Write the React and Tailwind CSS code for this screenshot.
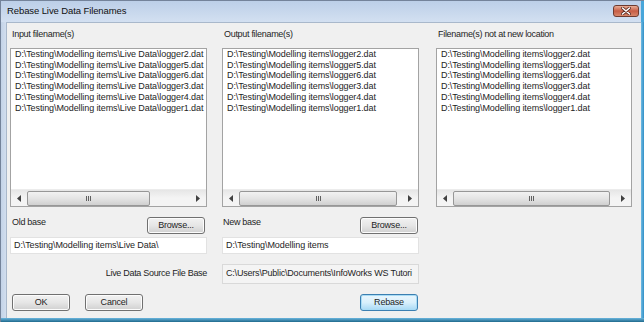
import React from 'react';

const FONT = { fontFamily: '"Liberation Sans", Arial, sans-serif' };

const inputFiles = [
  'D:\\Testing\\Modelling items\\Live Data\\logger2.dat',
  'D:\\Testing\\Modelling items\\Live Data\\logger5.dat',
  'D:\\Testing\\Modelling items\\Live Data\\logger6.dat',
  'D:\\Testing\\Modelling items\\Live Data\\logger3.dat',
  'D:\\Testing\\Modelling items\\Live Data\\logger4.dat',
  'D:\\Testing\\Modelling items\\Live Data\\logger1.dat',
];

const outputFiles = [
  'D:\\Testing\\Modelling items\\logger2.dat',
  'D:\\Testing\\Modelling items\\logger5.dat',
  'D:\\Testing\\Modelling items\\logger6.dat',
  'D:\\Testing\\Modelling items\\logger3.dat',
  'D:\\Testing\\Modelling items\\logger4.dat',
  'D:\\Testing\\Modelling items\\logger1.dat',
];

function ScrollBar({ thumb }) {
  return (
    <div className="h-[17px] flex bg-gradient-to-b from-[#e6e6e6] via-[#f4f4f4] to-[#f4f4f4] border-t border-[#ececec]">
      <div className="w-[16px] flex items-center justify-center">
        <svg width="4" height="7" viewBox="0 0 4 7"><path d="M4 0 L0 3.5 L4 7 Z" fill="#404040" /></svg>
      </div>
      <div className="flex-1 flex items-center">
        <div
          className={`${thumb} h-[15px] rounded-[2px] border border-[#979797] bg-gradient-to-b from-[#f2f2f2] via-[#e4e4e4] to-[#d0d0d0] flex items-center justify-center gap-[1px]`}
        >
          <div className="w-[1px] h-[5px] bg-[#606060]" />
          <div className="w-[1px] h-[5px] bg-[#606060]" />
          <div className="w-[1px] h-[5px] bg-[#606060]" />
        </div>
      </div>
      <div className="w-[16px] flex items-center justify-center">
        <svg width="4" height="7" viewBox="0 0 4 7"><path d="M0 0 L4 3.5 L0 7 Z" fill="#404040" /></svg>
      </div>
    </div>
  );
}

function ListBox({ items, thumb }) {
  return (
    <div className="h-[159px] bg-white border border-[#a3a3a3] flex flex-col">
      <div className="flex-1 pl-[4px] overflow-hidden">
        {items.map((f) => (
          <div key={f} className="text-[9px] leading-[10.7px] tracking-[-0.1px] text-[#1e1e1e] whitespace-nowrap">
            {f}
          </div>
        ))}
      </div>
      <ScrollBar thumb={thumb} />
    </div>
  );
}

function Button({ children, primary = false, className = '' }) {
  return (
    <div
      className={`${className} h-[17px] w-[58px] rounded-[3px] border flex items-center justify-center text-[9px] tracking-[-0.2px] text-[#1e1e1e] ${
        primary
          ? 'border-[#3c7fb1] bg-gradient-to-b from-[#eaf6fd] via-[#d9f0fc] to-[#a7d9f5] shadow-[inset_0_0_0_1px_#a9dcf5]'
          : 'border-[#707070] bg-gradient-to-b from-[#f2f2f2] via-[#e6e6e6] to-[#d0d0d0] shadow-[inset_0_0_0_1px_#fcfcfc]'
      }`}
    >
      {children}
    </div>
  );
}

function Label({ children }) {
  return (
    <div className="h-[12px] text-[9px] leading-[12px] tracking-[-0.3px] text-[#1e1e1e] whitespace-nowrap">
      {children}
    </div>
  );
}

export default function App() {
  return (
    <div
      style={FONT}
      className="w-[644px] h-[322px] flex flex-col bg-[#c8d7eb] border-l border-t border-[#74839a] overflow-hidden"
    >
      {/* title bar */}
      <div className="h-[21px] flex items-center bg-gradient-to-b from-[#bccfe8] to-[#d3e0f1] pl-[6px]">
        <span className="flex-1 text-[9.5px] text-[#101010] tracking-[-0.1px]">Rebase Live Data Filenames</span>
        <div className="w-[26px] h-[12px] mr-[2px] mt-[-1px] rounded-[3px] border border-[#6e3b30] bg-gradient-to-b from-[#e8ad97] via-[#c65d45] to-[#d7866a] flex items-center justify-center">
          <svg width="10" height="8" viewBox="0 0 10 8">
            <path d="M1.5 1 L8.5 7 M8.5 1 L1.5 7" stroke="#5a2a20" strokeWidth="3" strokeLinecap="round" />
            <path d="M1.5 1 L8.5 7 M8.5 1 L1.5 7" stroke="#ffffff" strokeWidth="1.6" strokeLinecap="round" />
          </svg>
        </div>
        <div className="w-[3px] self-stretch bg-[#48a6da]" />
      </div>

      <div className="flex-1 flex">
        <div className="w-[5px] bg-gradient-to-r from-[#c3d3e8] to-[#d2deee]" />
        <div className="flex-1 bg-[#f0f0f0] border-l border-t border-[#a9b8cb] pl-[3px] pt-[5px] flex">
          {/* column 1 */}
          <div className="w-[197px] flex flex-col">
            <div className="pl-[2px]"><Label>Input filename(s)</Label></div>
            <div className="mt-[8px]">
              <ListBox items={inputFiles} thumb="w-[123px]" />
            </div>
            <div className="mt-[9px] flex items-start justify-between pl-[2px] pr-[2px]">
              <Label>Old base</Label>
              <Button className="mt-[1px]">Browse...</Button>
            </div>
            <div className="mt-[3px] h-[17px] bg-white border border-[#e2e2e2] pl-[3px] flex items-center text-[9px] tracking-[-0.1px] text-[#1e1e1e] whitespace-nowrap">
              D:\Testing\Modelling items\Live Data\
            </div>
            <div className="mt-[10px] h-[20px] flex items-center justify-end text-[9px] tracking-[-0.3px] text-[#1e1e1e] whitespace-nowrap">
              Live Data Source File Base
            </div>
            <div className="mt-[10px] flex gap-[15px] pl-[2px]">
              <Button>OK</Button>
              <Button>Cancel</Button>
            </div>
          </div>

          {/* column 2 */}
          <div className="w-[197px] ml-[15px] flex flex-col">
            <div className="pl-[2px]"><Label>Output filename(s)</Label></div>
            <div className="mt-[8px]">
              <ListBox items={outputFiles} thumb="w-[158px]" />
            </div>
            <div className="mt-[9px] flex items-start justify-between pl-[1px] pr-[1px]">
              <Label>New base</Label>
              <Button className="mt-[1px]">Browse...</Button>
            </div>
            <div className="mt-[3px] h-[17px] bg-white border border-[#e2e2e2] pl-[3px] flex items-center text-[9px] tracking-[-0.1px] text-[#1e1e1e] whitespace-nowrap">
              D:\Testing\Modelling items
            </div>
            <div className="mt-[10px] h-[20px] bg-[#f4f4f4] border border-[#d9d9d9] pl-[3px] flex items-center text-[9px] tracking-[-0.2px] text-[#1e1e1e] whitespace-nowrap overflow-hidden">
              C:\Users\Public\Documents\InfoWorks WS Tutori
            </div>
            <div className="mt-[10px] flex justify-end pr-[1px]">
              <Button primary>Rebase</Button>
            </div>
          </div>

          {/* column 3 */}
          <div className="w-[196px] ml-[17px] flex flex-col">
            <div className="pl-[2px]"><Label>Filename(s) not at new location</Label></div>
            <div className="mt-[8px]">
              <ListBox items={outputFiles} thumb="w-[157px]" />
            </div>
          </div>
        </div>
        <div className="w-[3px] bg-gradient-to-r from-[#6fbbe4] to-[#2f8fc5]" />
      </div>
      <div className="h-[4px] bg-gradient-to-b from-[#6ab6df] to-[#1d6a8c]" />
    </div>
  );
}
